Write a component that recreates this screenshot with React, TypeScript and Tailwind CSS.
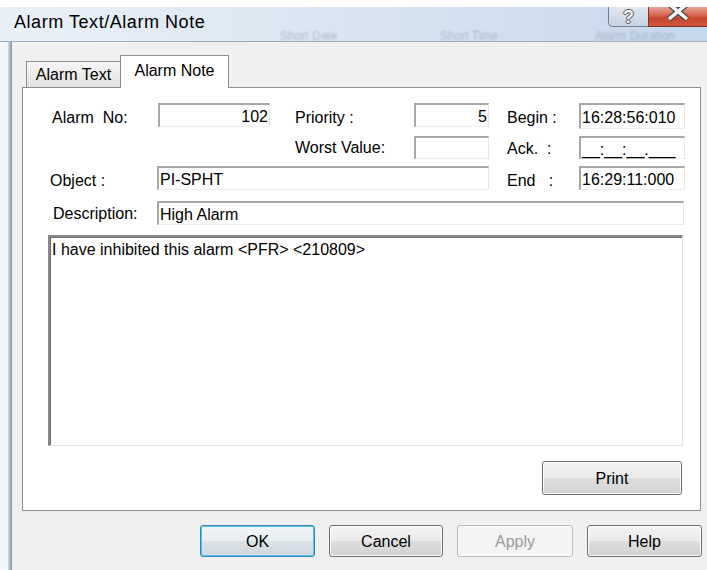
import type { ReactNode } from "react";

// Sunken edit box, classic 3D look: dark top/left, light bottom/right
function Box({
  className,
  children,
  right = false,
}: {
  className: string;
  children?: ReactNode;
  right?: boolean;
}) {
  return (
    <div
      className={`${className} flex items-center pt-[3px] leading-[18px] bg-white border-t-2 border-l-2 border-t-[#a7a7a7] border-l-[#a7a7a7] border-r border-b border-r-[#e6e6e6] border-b-[#eeeeee] ${
        right ? "justify-end pr-[1px]" : "pl-[1px]"
      }`}
    >
      {children}
    </div>
  );
}

function Label({ className, children }: { className: string; children: ReactNode }) {
  return (
    <div className={`${className} flex items-center leading-[18px] whitespace-pre`}>
      {children}
    </div>
  );
}

function Button({
  className,
  children,
  focused = false,
  disabled = false,
}: {
  className: string;
  children: ReactNode;
  focused?: boolean;
  disabled?: boolean;
}) {
  let look =
    "border-[#707070] text-black bg-[linear-gradient(to_bottom,#f4f4f4_0%,#ebebeb_48%,#dedede_52%,#d2d2d2_100%)] shadow-[inset_0_0_0_1px_#fbfbfb]";
  if (focused)
    look =
      "border-[#3c7fb1] text-black bg-[linear-gradient(to_bottom,#f2f5f7_0%,#e9eef1_48%,#dbe2e7_52%,#cfd7dd_100%)] shadow-[inset_0_0_0_1px_#56c4f0]";
  if (disabled)
    look = "border-[#b6babd] text-[#9a9a9a] bg-[#f4f4f4] shadow-[inset_0_0_0_1px_#fcfcfc]";
  return (
    <button
      className={`${className} ${look} border rounded-[3px] flex items-center justify-center pt-[2px] text-[16px] leading-[18px]`}
    >
      {children}
    </button>
  );
}

function TitleBar() {
  return (
    <div className="h-[35px] shrink-0 flex flex-col bg-[linear-gradient(to_right,#eaf0f7_0%,#dbe6f2_45%,#c6d8ec_100%)] border-b border-[#9fb0c2]">
      <div className="h-[20px] flex items-start">
        <div className="ml-[14px] mt-[5px] text-[18px] leading-[20px] tracking-[0.55px] text-black">
          Alarm Text/Alarm Note
        </div>
        <div className="ml-auto flex h-[20px]">
          <div className="w-[40px] h-[20px] flex justify-center items-center border border-t-0 border-r-0 border-[#6f7f92] rounded-bl-[5px] bg-[linear-gradient(to_bottom,#dfe7f0,#c7d4e3)]">
            <span className="text-[18px] leading-[18px] font-bold text-[#f4f6f8] [text-shadow:1px_0_#555,-1px_0_#555,0_1px_#555,0_-1px_#555]">
              ?
            </span>
          </div>
          <div className="w-[59px] h-[20px] flex justify-center items-start border-b border-l border-[#7b3326] bg-[linear-gradient(to_bottom,#e6a596_0%,#d4634c_45%,#c8452d_60%,#d0573f_100%)]">
            <svg width="26" height="14" viewBox="0 0 26 14">
              <path d="M4 -3 L22 12 M22 -3 L4 12" stroke="#4a4a4a" strokeWidth="6" />
              <path d="M4 -3 L22 12 M22 -3 L4 12" stroke="#f6f6f6" strokeWidth="3.5" />
            </svg>
          </div>
        </div>
      </div>
      {/* window behind the dialog, seen through the glass */}
      <div className="flex-1 flex items-center text-[12px] text-[#4a5666] opacity-30 blur-[1.2px]">
        <span className="w-[280px]" />
        <span className="w-[160px]">Short Date</span>
        <span className="w-[155px]">Short Time</span>
        <span>Alarm Duration</span>
      </div>
    </div>
  );
}

function Tabs() {
  return (
    <div className="ml-[4px] h-[33px] -mb-px flex items-end relative z-10">
      <div className="w-[95px] h-[26px] mb-px flex justify-center pt-[4px] leading-[18px] text-[16px] border border-b-0 border-[#8c8e94] bg-[linear-gradient(to_bottom,#f6f6f6,#e2e2e2)]">
        Alarm Text
      </div>
      <div className="-ml-px w-[109px] h-[33px] flex justify-center pt-[6px] leading-[18px] text-[16px] border border-b-0 border-[#8c8e94] bg-white">
        Alarm Note
      </div>
    </div>
  );
}

function NotePanel() {
  return (
    <div className="w-[679px] h-[424px] shrink-0 border border-[#8c8e94] bg-white flex flex-col text-[16px]">
      <div className="mt-[15px] h-[24px] flex">
        <Label className="w-[135px] pl-[29px] pt-[5px]">Alarm  No:</Label>
        <Box className="w-[112px]" right>
          102
        </Box>
        <Label className="w-[144px] pl-[25px] pt-[5px]">Priority :</Label>
        <Box className="w-[75px]" right>
          5
        </Box>
        <Label className="w-[90px] pl-[18px] pt-[5px]">Begin :</Label>
        <Box className="w-[106px] h-[26px]">16:28:56:010</Box>
      </div>

      <div className="mt-[9px] h-[23px] flex">
        <div className="w-[247px]" />
        <Label className="w-[144px] pl-[25px] pt-[1px]">Worst Value:</Label>
        <Box className="w-[75px]" />
        <Label className="w-[90px] pl-[18px] pt-[3px]">Ack.  :</Label>
        <Box className="w-[106px]">__:__:__.___</Box>
      </div>

      <div className="mt-[7px] h-[24px] flex">
        <Label className="w-[134px] pl-[27px] pt-[6px]">Object :</Label>
        <Box className="w-[332px]">PI-SPHT</Box>
        <Label className="w-[90px] pl-[18px] pt-[5px]">End   :</Label>
        <Box className="w-[106px]">16:29:11:000</Box>
      </div>

      <div className="mt-[11px] h-[24px] flex">
        <Label className="w-[134px] pl-[30px] pt-[2px]">Description:</Label>
        <Box className="w-[527px]">High Alarm</Box>
      </div>

      <div className="mt-[10px] ml-[25px] w-[635px] h-[211px] shrink-0 bg-white pt-[4px] pl-[2px] leading-[18px] border-t-2 border-l-2 border-t-[#8a8a8a] border-l-[#8a8a8a] border-r border-b border-r-[#e2e2e2] border-b-[#e2e2e2] shadow-[inset_1px_1px_0_#6f6f6f]">
        I have inhibited this alarm &lt;PFR&gt; &lt;210809&gt;
      </div>

      <div className="mt-[15px] flex justify-end pr-[18px]">
        <Button className="w-[140px] h-[34px]">Print</Button>
      </div>
    </div>
  );
}

export default function App() {
  return (
    <div className="w-[707px] h-[570px] overflow-hidden bg-white text-black font-['Liberation_Sans',Arial,sans-serif] flex flex-col">
      <div className="h-[7px] shrink-0" />
      <TitleBar />
      <div className="flex flex-1 min-h-0">
        <div className="w-[8px] bg-[#f3f6fa]" />
        <div className="w-[4px] bg-[linear-gradient(to_right,#cfdbea,#a9bace,#7f8c9b)]" />
        <div className="flex-1 bg-[#f0f0f0] pl-[10px] pt-[13px] flex flex-col">
          <Tabs />
          <NotePanel />
          <div className="mt-[14px] ml-[178px] flex gap-[14px]">
            <Button className="w-[115px] h-[32px]" focused>
              OK
            </Button>
            <Button className="w-[114px] h-[32px]">Cancel</Button>
            <Button className="w-[116px] h-[32px]" disabled>
              Apply
            </Button>
            <Button className="w-[115px] h-[32px]">Help</Button>
          </div>
        </div>
      </div>
    </div>
  );
}
